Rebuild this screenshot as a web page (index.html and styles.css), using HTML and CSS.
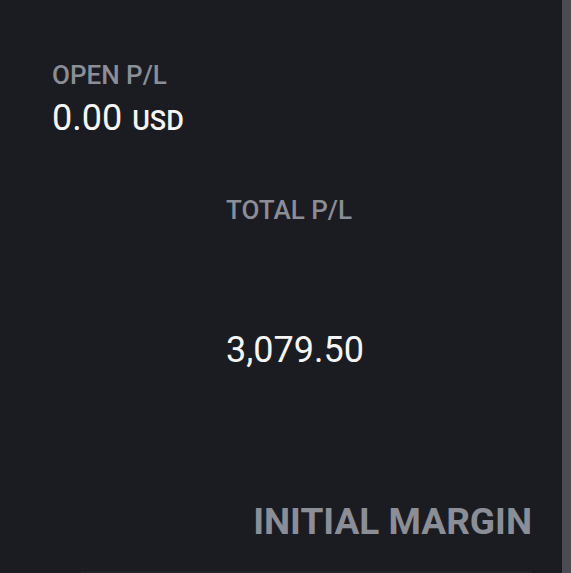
FILE: index.html
```html
<!DOCTYPE html>
<html>
<head>
<meta charset="utf-8">
<link rel="stylesheet" href="styles.css">
</head>
<body>
<div class="page">
  <div class="content">
    <section class="stat open">
      <div class="label">OPEN P/L</div>
      <div class="value">0.00 <span class="unit">USD</span></div>
    </section>
    <section class="stat total">
      <div class="label">TOTAL P/L</div>
      <div class="value big-gap">3,079.50</div>
    </section>
    <section class="margin">
      <div class="heading">INITIAL MARGIN</div>
    </section>
    <div class="bar"></div>
  </div>
  <div class="scrollbar"></div>
</div>
</body>
</html>
```
FILE: styles.css
```css
html, body {
  margin: 0;
  padding: 0;
  background: #1b1c21;
  height: 100%;
  overflow: hidden;
}
.page {
  display: flex;
  height: 573px;
  font-family: Roboto, "Liberation Sans", sans-serif;
}
.content {
  flex: 1;
  padding-top: 60px;
  display: flex;
  flex-direction: column;
}
.scrollbar {
  width: 9px;
  background: #4b4c51;
}
.label {
  font-size: 26px;
  line-height: 30px;
  font-weight: 500;
  color: #8b8e97;
}
.value {
  font-size: 36px;
  line-height: 40px;
  color: #f6f6f6;
  margin-top: 8px;
}
.unit {
  font-size: 27px;
  font-weight: 500;
  margin-left: 1px;
}
.open {
  margin-left: 52px;
}
.total {
  margin-left: 226px;
  margin-top: 54px;
}
.value.big-gap {
  margin-top: 105px;
}
.margin {
  margin-top: 130px;
  display: flex;
  justify-content: flex-end;
  padding-right: 30px;
}
.heading {
  font-size: 37px;
  line-height: 44px;
  font-weight: 700;
  color: #8b8e97;
}
.bar {
  margin-top: 27px;
  margin-left: 81px;
  width: 451px;
  height: 10px;
  background: #222329;
}
```
